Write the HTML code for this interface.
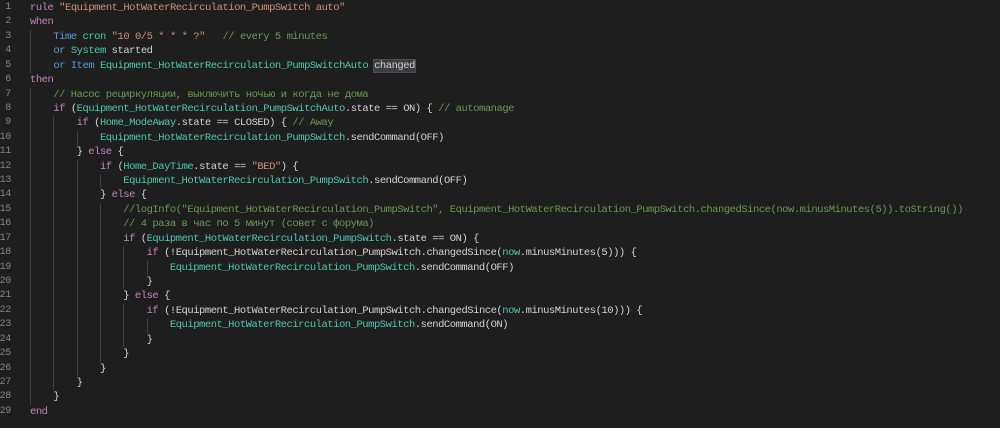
<!DOCTYPE html>
<html><head><meta charset="utf-8"><style>
html,body{margin:0;padding:0;background:#1e1e1e;width:1000px;height:428px;overflow:hidden}
#g{position:absolute;left:-20px;top:1px;width:31px;text-align:right;font:10px/14.43px "Liberation Mono",monospace;color:#858585;letter-spacing:-0.3px}
#c{position:absolute;left:30px;top:1px;font:10.5px/14.43px "Liberation Mono","DejaVu Sans Mono",monospace;letter-spacing:-0.47px;color:#d4d4d4;white-space:normal}
#c div{height:14.43px;white-space:pre}
#g div{height:14.43px}
i{display:inline-block;width:23.32px;height:14.43px;vertical-align:top;box-shadow:inset 1px 0 0 #404040;font-style:normal}
.k{color:#c586c0}.s{color:#ce9178}.m{color:#6a9955}.t{color:#4ec9b0}.b{color:#569cd6}
.h{background:#3a3d41;outline:1px solid #4a4d51}
</style></head><body>
<div id="g"><div>1</div><div>2</div><div>3</div><div>4</div><div>5</div><div>6</div><div>7</div><div>8</div><div>9</div><div>10</div><div>11</div><div>12</div><div>13</div><div>14</div><div>15</div><div>16</div><div>17</div><div>18</div><div>19</div><div>20</div><div>21</div><div>22</div><div>23</div><div>24</div><div>25</div><div>26</div><div>27</div><div>28</div><div>29</div></div>
<div id="c"><div><span class="k">rule</span> <span class="s">"Equipment_HotWaterRecirculation_PumpSwitch auto"</span></div><div><span class="k">when</span></div><div><i></i><span class="b">Time</span> <span class="t">cron</span> <span class="s">"10 0/5 * * * ?"</span>   <span class="m">// every 5 minutes</span></div><div><i></i><span class="b">or</span> <span class="t">System</span> started</div><div><i></i><span class="b">or</span> <span class="b">Item</span> <span class="t">Equipment_HotWaterRecirculation_PumpSwitchAuto</span> <span class="h">changed</span></div><div><span class="k">then</span></div><div><i></i><span class="m">// Насос рециркуляции, выключить ночью и когда не дома</span></div><div><i></i><span class="k">if</span> (<span class="t">Equipment_HotWaterRecirculation_PumpSwitchAuto</span>.state == ON) { <span class="m">// automanage</span></div><div><i></i><i></i><span class="k">if</span> (<span class="t">Home_ModeAway</span>.state == CLOSED) { <span class="m">// Away</span></div><div><i></i><i></i><i></i><span class="t">Equipment_HotWaterRecirculation_PumpSwitch</span>.sendCommand(OFF)</div><div><i></i><i></i>} <span class="k">else</span> {</div><div><i></i><i></i><i></i><span class="k">if</span> (<span class="t">Home_DayTime</span>.state == <span class="s">"BED"</span>) {</div><div><i></i><i></i><i></i><i></i><span class="t">Equipment_HotWaterRecirculation_PumpSwitch</span>.sendCommand(OFF)</div><div><i></i><i></i><i></i>} <span class="k">else</span> {</div><div><i></i><i></i><i></i><i></i><span class="m">//logInfo("Equipment_HotWaterRecirculation_PumpSwitch", Equipment_HotWaterRecirculation_PumpSwitch.changedSince(now.minusMinutes(5)).toString())</span></div><div><i></i><i></i><i></i><i></i><span class="m">// 4 раза в час по 5 минут (совет с форума)</span></div><div><i></i><i></i><i></i><i></i><span class="k">if</span> (<span class="t">Equipment_HotWaterRecirculation_PumpSwitch</span>.state == ON) {</div><div><i></i><i></i><i></i><i></i><i></i><span class="k">if</span> (!Equipment_HotWaterRecirculation_PumpSwitch.changedSince(<span class="t">now</span>.minusMinutes(5))) {</div><div><i></i><i></i><i></i><i></i><i></i><i></i><span class="t">Equipment_HotWaterRecirculation_PumpSwitch</span>.sendCommand(OFF)</div><div><i></i><i></i><i></i><i></i><i></i>}</div><div><i></i><i></i><i></i><i></i>} <span class="k">else</span> {</div><div><i></i><i></i><i></i><i></i><i></i><span class="k">if</span> (!Equipment_HotWaterRecirculation_PumpSwitch.changedSince(<span class="t">now</span>.minusMinutes(10))) {</div><div><i></i><i></i><i></i><i></i><i></i><i></i><span class="t">Equipment_HotWaterRecirculation_PumpSwitch</span>.sendCommand(ON)</div><div><i></i><i></i><i></i><i></i><i></i>}</div><div><i></i><i></i><i></i><i></i>}</div><div><i></i><i></i><i></i>}</div><div><i></i><i></i>}</div><div><i></i>}</div><div><span class="k">end</span></div></div>
</body></html>
